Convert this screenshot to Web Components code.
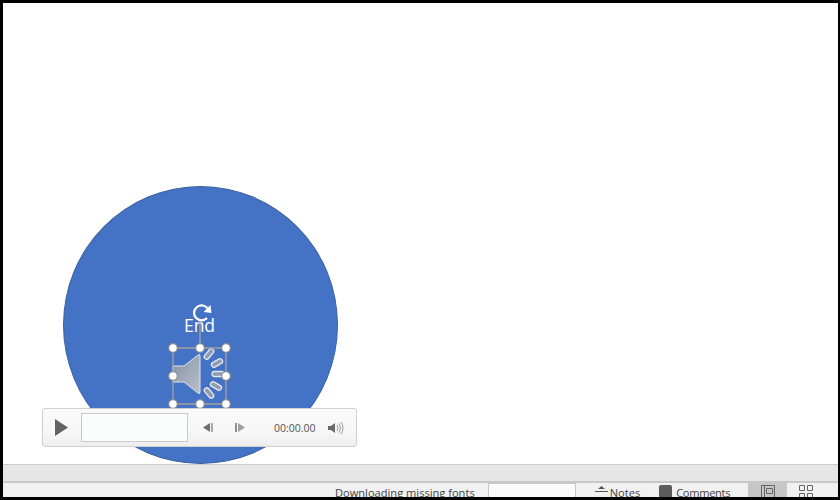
<!DOCTYPE html>
<html>
<head>
<meta charset="utf-8">
<style>
  html, body { margin: 0; height: 100%; background: #000; }
  body { overflow: hidden; font-family: "Segoe UI", "Open Sans", "Liberation Sans", sans-serif; }
</style>
</head>
<body>
<app-window>
  <slide-canvas>
    <blue-circle label="End"></blue-circle>
    <audio-icon></audio-icon>
    <media-bar time="00:00.00"></media-bar>
  </slide-canvas>
  <scroll-band></scroll-band>
  <status-bar></status-bar>
</app-window>

<script>
class AppWindow extends HTMLElement {
  constructor() {
    super();
    this.attachShadow({ mode: "open" });
    this.shadowRoot.innerHTML = `
      <style>
        :host {
          display: flex;
          flex-direction: column;
          box-sizing: border-box;
          width: 840px;
          height: 500px;
          padding: 3px 2px 3px 3px;
          background: #000;
          overflow: hidden;
        }
      </style>
      <slot></slot>
    `;
  }
}

class SlideCanvas extends HTMLElement {
  constructor() {
    super();
    this.attachShadow({ mode: "open" });
    this.shadowRoot.innerHTML = `
      <style>
        :host {
          display: block;
          position: relative;
          height: 461px;
          flex: none;
          background: #fff;
        }
      </style>
      <slot></slot>
    `;
  }
}

class BlueCircle extends HTMLElement {
  constructor() {
    super();
    this.attachShadow({ mode: "open" });
  }
  connectedCallback() {
    this.shadowRoot.innerHTML = `
      <style>
        :host {
          position: absolute;
          left: 60px;
          top: 183px;
          width: 275px;
          height: 278px;
          box-sizing: border-box;
          border-radius: 50%;
          border: 1px solid #3a619f;
          background: #4472c4;
          color: #fff;
          font-size: 17.500px;
          text-align: center;
        }
        span { display: block; margin-top: 126px; padding-right: 2px; line-height: 24px; }
      </style>
      <span>${this.getAttribute("label")}</span>
    `;
  }
}

class AudioIcon extends HTMLElement {
  constructor() {
    super();
    this.attachShadow({ mode: "open" });
    this.shadowRoot.innerHTML = `
      <style>
        :host {
          position: absolute;
          left: 157px;
          top: 300px;
          width: 80px;
          height: 110px;
        }
        svg { display: block; }
      </style>
      <svg width="80" height="110" viewBox="0 0 80 110">
        <defs>
          <linearGradient id="cone" x1="0" y1="0" x2="1" y2="1">
            <stop offset="0" stop-color="#8692a6"/>
            <stop offset="1" stop-color="#b9bfca"/>
          </linearGradient>
        </defs>
        <!-- speaker -->
        <path d="M13 63 L24 63 L38 52 Q40 50.500 40 53 L40 89 Q40 92 38 90 L24 79 L13 79 Z" fill="url(#cone)" stroke="#dfe3e9" stroke-width="1"/>
        <!-- sound waves -->
        <g fill="#8f9bb0" stroke="#e4e8ee" stroke-width="1.300">
          <rect x="-6" y="-2.500" width="12" height="5" rx="2.500" transform="translate(49 51) rotate(-50)"/>
          <rect x="-6" y="-2.500" width="12" height="5" rx="2.500" transform="translate(57 60) rotate(-30)"/>
          <rect x="-6" y="-2.500" width="12" height="5" rx="2.500" transform="translate(58 71)"/>
          <rect x="-6" y="-2.500" width="12" height="5" rx="2.500" transform="translate(56 83) rotate(30)"/>
          <rect x="-6" y="-2.500" width="12" height="5" rx="2.500" transform="translate(49 90) rotate(50)"/>
        </g>
        <!-- selection frame -->
        <path d="M13 45 H66 V101 H13 Z M40 45 V16" fill="none" stroke="#a3a3a3" stroke-width="1.300"/>
        <g fill="#fff" stroke="#8e8e8e" stroke-width="1.200">
          <circle cx="13" cy="45" r="4.300"/>
          <circle cx="40" cy="45" r="4.300"/>
          <circle cx="66" cy="45" r="4.300"/>
          <circle cx="13" cy="73" r="4.300"/>
          <circle cx="66" cy="73" r="4.300"/>
          <circle cx="13" cy="101" r="4.300"/>
          <circle cx="40" cy="101" r="4.300"/>
          <circle cx="66" cy="101" r="4.300"/>
        </g>
        <!-- rotate handle -->
        <path d="M48 6 A7.500 7.500 0 1 0 47 15" fill="none" stroke="#fff" stroke-width="2.200"/>
        <path d="M43.500 9 L51.500 10 L50.500 2 Z" fill="#fff"/>
      </svg>
    `;
  }
}

class MediaBar extends HTMLElement {
  constructor() {
    super();
    this.attachShadow({ mode: "open" });
  }
  connectedCallback() {
    this.shadowRoot.innerHTML = `
      <style>
        :host {
          position: absolute;
          left: 39px;
          top: 405px;
          width: 315px;
          height: 39px;
          box-sizing: border-box;
          display: flex;
          align-items: center;
          padding: 0 0 0 11px;
          border: 1px solid #cfcfcf;
          border-radius: 3px;
          background: linear-gradient(#fafafa, #f7f7f7 60%, #eeeeee);
          color: #555;
          font-size: 11px;
        }
        svg { display: block; flex: none; }
        .track {
          width: 107px;
          height: 29px;
          margin-left: 12px;
          box-sizing: border-box;
          border: 1px solid #c9c9c9;
          background: #fbfcfc;
          flex: none;
        }
        .prev { margin-left: 15px; }
        .next { margin-left: 20px; }
        .time { margin-left: 29px; width: 41px; letter-spacing: 0; font-size: 10.500px; }
        .vol { margin-left: 13px; }
      </style>
      <svg width="15" height="19" viewBox="0 0 15 19"><path d="M1 1 L14 9.500 L1 18 Z" fill="#636363"/></svg>
      <div class="track"></div>
      <svg class="prev" width="11" height="11" viewBox="0 0 11 11"><path d="M7 1 L0 5.500 L7 10 Z" fill="#6f6f6f"/><rect x="8" y="1" width="2" height="9" fill="#a9a9a9"/></svg>
      <svg class="next" width="11" height="11" viewBox="0 0 11 11"><rect x="1" y="1" width="2" height="9" fill="#8f8f8f"/><path d="M4 1 L11 5.500 L4 10 Z" fill="#a0a0a0"/></svg>
      <span class="time">${this.getAttribute("time")}</span>
      <svg class="vol" width="16" height="14" viewBox="0 0 16 14">
        <path d="M0 5 H3 L7 2 V12 L3 9 H0 Z" fill="#6a6a6a"/>
        <path d="M9 4 Q11 7 9 10 M11 2.500 Q14 7 11 11.500 M13 1 Q17 7 13 13" fill="none" stroke="#9a9a9a" stroke-width="1"/>
      </svg>
    `;
  }
}

class ScrollBand extends HTMLElement {
  constructor() {
    super();
    this.attachShadow({ mode: "open" });
    this.shadowRoot.innerHTML = `
      <style>
        :host {
          display: block;
          height: 19px;
          flex: none;
          box-sizing: border-box;
          background: #e6e6e6;
          border-top: 1px solid #cccccc;
          border-bottom: 2px solid #c8c8c8;
        }
      </style>
    `;
  }
}

class StatusBar extends HTMLElement {
  constructor() {
    super();
    this.attachShadow({ mode: "open" });
    this.shadowRoot.innerHTML = `
      <style>
        :host {
          display: flex;
          flex: 1;
          min-height: 0;
          overflow: hidden;
          background: #f1f1f1;
          color: #444;
          font-size: 11.100px;
          line-height: 16px;
          padding-left: 332px;
          align-items: flex-start;
        }
        span { white-space: nowrap; flex: none; padding-top: 2px; }
        .progress {
          flex: none;
          box-sizing: border-box;
          width: 88px;
          height: 20px;
          margin: 0 0 0 13px;
          border: 1px solid #c6c6c6;
          background: #fafafa;
        }
        .notes { display: flex; margin-left: 19px; gap: 2px; }
        .comments { display: flex; margin-left: 19px; gap: 4px; }
        .comments span { letter-spacing: -.3px; }
        .square { width: 13px; height: 13px; margin-top: 2px; background: #5c5c5c; border-radius: 2px; flex: none; }
        .view {
          flex: none;
          width: 39px;
          height: 20px;
          display: flex;
          justify-content: center;
          padding-top: 2px;
          box-sizing: border-box;
        }
        .view.on { background: #c6c6c6; margin-left: 18px; }
        .view.grid { margin-left: -1px; }
        svg { display: block; }
      </style>
      <span>Downloading missing fonts</span>
      <div class="progress"></div>
      <div class="notes">
        <svg width="13" height="16" viewBox="0 0 13 16" style="margin-top:1px"><path d="M3 5 L6.500 2 L10 5 Z" fill="#555"/><rect x="0" y="7" width="13" height="1" fill="#555"/></svg>
        <span>Notes</span>
      </div>
      <div class="comments">
        <div class="square"></div>
        <span>Comments</span>
      </div>
      <div class="view on">
        <svg width="14" height="14" viewBox="0 0 14 14"><path d="M.500.500H13.500V13.500H.500Z M3.500.500V13.500 M5.500 3.500H11.500V8.500H5.500Z" fill="none" stroke="#666"/></svg>
      </div>
      <div class="view grid">
        <svg width="14" height="14" viewBox="0 0 14 14"><path d="M.500.500H5.500V5.500H.500Z M8.500.500H13.500V5.500H8.500Z M.500 8.500H5.500V13.500H.500Z M8.500 8.500H13.500V13.500H8.500Z" fill="none" stroke="#666"/></svg>
      </div>
    `;
  }
}

customElements.define("app-window", AppWindow);
customElements.define("slide-canvas", SlideCanvas);
customElements.define("blue-circle", BlueCircle);
customElements.define("audio-icon", AudioIcon);
customElements.define("media-bar", MediaBar);
customElements.define("scroll-band", ScrollBand);
customElements.define("status-bar", StatusBar);
</script>
</body>
</html>
